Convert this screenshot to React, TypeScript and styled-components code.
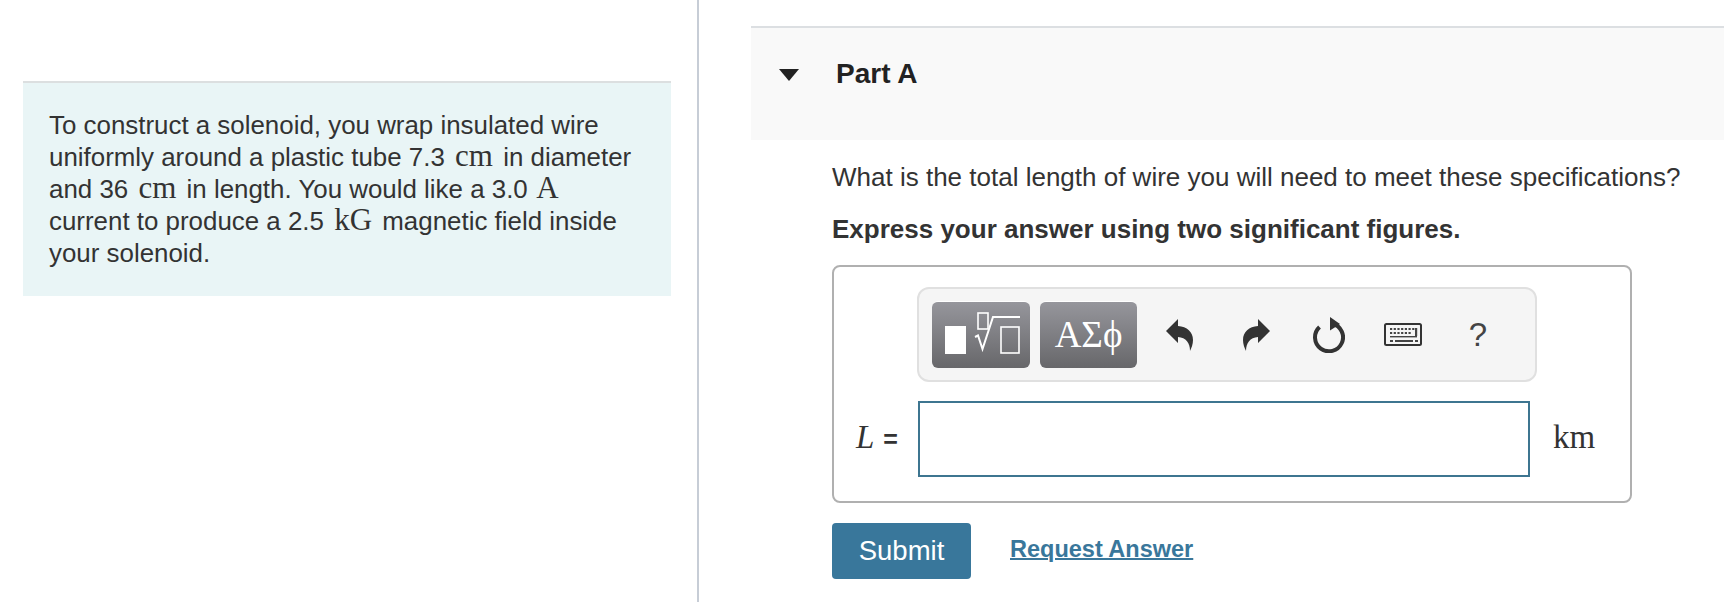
import React from 'react';
import styled, { createGlobalStyle } from 'styled-components';

const GlobalStyle = createGlobalStyle`
  html, body {
    margin: 0;
    padding: 0;
    background: #fff;
    overflow: hidden;
  }
`;

const Page = styled.div`
  width: 1724px;
  height: 602px;
  display: flex;
  font-family: 'Liberation Sans', Arial, sans-serif;
  color: #333;
  overflow: hidden;
`;

const LeftColumn = styled.aside`
  width: 699px;
  flex: none;
  box-sizing: border-box;
  padding: 81px 26px 0 23px;
  border-right: 2px solid #c7cdd6;
`;

const IntroPanel = styled.div`
  height: 215px;
  box-sizing: border-box;
  background: #e9f5f6;
  border-top: 2px solid #dcdfe0;
  padding: 26px 30px 0 26px;
  font-size: 25.9px;
  line-height: 32px;
`;

const Unit = styled.span`
  font-family: 'Liberation Serif', serif;
  font-size: 31px;
  line-height: 0;
  margin: 0 2.5px;
`;

const RightColumn = styled.main`
  flex: 1;
  min-width: 0;
  padding: 26px 0 0 52px;
`;

const PartHeader = styled.div`
  height: 114px;
  box-sizing: border-box;
  background: #f9f9f9;
  border-top: 2px solid #dcdfe2;
  display: flex;
  align-items: flex-start;
  padding: 31px 0 0 28px;
`;

const Caret = styled.span`
  width: 0;
  height: 0;
  margin: 10px 37px 0 0;
  border-left: 10px solid transparent;
  border-right: 10px solid transparent;
  border-top: 12px solid #222;
`;

const PartTitle = styled.h2`
  margin: 0;
  font-size: 28px;
  line-height: 30px;
  font-weight: 700;
  color: #222;
`;

const PartBody = styled.div`
  padding: 21px 0 0 81px;
`;

const Question = styled.p`
  margin: 0;
  font-size: 26px;
  line-height: 32px;
  white-space: nowrap;
`;

const Instruction = styled.p`
  margin: 20px 0 0;
  font-size: 26px;
  line-height: 32px;
  font-weight: 700;
`;

const AnswerBox = styled.div`
  width: 800px;
  height: 238px;
  box-sizing: border-box;
  margin-top: 20px;
  border: 2px solid #b0b0b0;
  border-radius: 8px;
  padding: 20px 32px 0 22px;
`;

const Toolbar = styled.div`
  width: 620px;
  height: 95px;
  box-sizing: border-box;
  margin-left: 61px;
  background: #f5f5f5;
  border: 2px solid #e0e0e0;
  border-radius: 12px;
  display: flex;
  align-items: center;
  padding: 0 0 0 13px;
`;

const TemplateButton = styled.div<{ $wide?: boolean }>`
  width: ${(props) => (props.$wide ? 97 : 98)}px;
  height: 67px;
  margin-right: 10px;
  border-radius: 6px;
  background: linear-gradient(#96969c, #67676a);
  border-top: 1px solid #fff;
  box-sizing: border-box;
  display: flex;
  align-items: center;
  justify-content: center;
  color: #fff;
  font-family: 'Liberation Serif', serif;
  font-size: 37px;
  line-height: 60px;

  svg {
    margin: -3px 0 0 4px;
  }
`;

const ToolIcon = styled.div<{ $w: number }>`
  width: ${(props) => props.$w}px;
  flex: none;
  display: flex;
  justify-content: center;
  align-items: center;
  color: #333;
`;

const HelpMark = styled.span`
  font-size: 33px;
  color: #444;
`;

const InputRow = styled.div`
  display: flex;
  align-items: center;
  margin-top: 19px;
`;

const VarLabel = styled.div`
  width: 62px;
  flex: none;
  box-sizing: border-box;
  padding-bottom: 3px;
  font-family: 'Liberation Serif', serif;
  white-space: nowrap;

  i {
    font-size: 33px;
  }

  span {
    font-family: 'Liberation Sans', sans-serif;
    font-size: 25px;
    font-weight: 700;
    margin-left: 9px;
  }
`;

const AnswerInput = styled.div`
  width: 612px;
  height: 76px;
  flex: none;
  box-sizing: border-box;
  border: 2px solid #3d7590;
  background: #fff;
`;

const UnitLabel = styled.div`
  margin-left: 23px;
  padding-bottom: 4px;
  font-family: 'Liberation Serif', serif;
  font-size: 33px;
`;

const Actions = styled.div`
  display: flex;
  align-items: center;
  margin-top: 20px;
`;

const SubmitButton = styled.button`
  width: 139px;
  height: 56px;
  border: 0;
  border-radius: 4px;
  background: #39779b;
  color: #fff;
  font-family: 'Liberation Sans', Arial, sans-serif;
  font-size: 27.5px;
  padding: 0;
`;

const RequestLink = styled.a`
  margin-left: 39px;
  color: #39779b;
  font-size: 23.5px;
  font-weight: 700;
  text-decoration: underline;
  text-decoration-thickness: 2px;
  position: relative;
  top: -2px;
`;

function RadicalIcon() {
  return (
    <svg width="76" height="44" viewBox="0 0 76 44" fill="none">
      <rect x="0" y="14" width="21" height="28" fill="#fff" />
      <rect x="33" y="1" width="10" height="16" stroke="#fff" strokeWidth="1.6" />
      <path d="M30 25 L33 23.5 L37.5 37 L48 5 H75" stroke="#fff" strokeWidth="2" />
      <rect x="56" y="15" width="18" height="26" stroke="#fff" strokeWidth="1.6" />
    </svg>
  );
}

function UndoIcon({ flip }: { flip?: boolean }) {
  return (
    <svg
      width="27"
      height="32"
      viewBox="0 0 27 32"
      style={flip ? { transform: 'scaleX(-1)' } : undefined}
    >
      <path
        fill="currentColor"
        d="M0 12 L12 0 V7 C21 7.5 27 13 27 21 C27 25 25.5 29 24 32 C24 24 20 18.5 12 18 V24 Z"
      />
    </svg>
  );
}

function ResetIcon() {
  return (
    <svg width="32" height="36" viewBox="0 0 32 36" fill="none">
      <path d="M19.5 6.7 A14 14 0 1 1 6.5 10" stroke="currentColor" strokeWidth="4" />
      <path d="M17 0 L27 7 L17 13.5 Z" fill="currentColor" />
    </svg>
  );
}

function KeyboardIcon() {
  const keys: React.ReactNode[] = [];
  for (let i = 0; i < 7; i++) {
    keys.push(<rect key={`a${i}`} x={6 + i * 3.7} y={5} width="2.2" height="2" />);
  }
  for (let i = 0; i < 6; i++) {
    keys.push(<rect key={`b${i}`} x={6 + i * 3.7} y={9} width="2.2" height="2" />);
  }
  return (
    <svg width="38" height="24" viewBox="0 0 38 24" fill="#444">
      <rect x="1" y="1" width="36" height="21" rx="1.5" fill="none" stroke="#333" strokeWidth="2" />
      {keys}
      <rect x="31" y="5" width="2.2" height="8" />
      <rect x="6" y="13" width="27" height="1.4" />
      <rect x="6" y="17" width="3" height="2" />
      <rect x="11" y="17" width="18" height="2" />
      <rect x="31" y="17" width="3" height="2" />
    </svg>
  );
}

export default function App() {
  return (
    <Page>
      <GlobalStyle />
      <LeftColumn>
        <IntroPanel>
          To construct a solenoid, you wrap insulated wire uniformly around a plastic tube 7.3
          <Unit> cm </Unit>in diameter and 36<Unit> cm </Unit>in length. You would like a 3.0
          <Unit> A </Unit>current to produce a 2.5<Unit> kG </Unit>magnetic field inside your
          solenoid.
        </IntroPanel>
      </LeftColumn>
      <RightColumn>
        <PartHeader>
          <Caret />
          <PartTitle>Part A</PartTitle>
        </PartHeader>
        <PartBody>
          <Question>What is the total length of wire you will need to meet these specifications?</Question>
          <Instruction>Express your answer using two significant figures.</Instruction>
          <AnswerBox>
            <Toolbar>
              <TemplateButton>
                <RadicalIcon />
              </TemplateButton>
              <TemplateButton $wide>ΑΣϕ</TemplateButton>
              <ToolIcon $w={65}>
                <UndoIcon />
              </ToolIcon>
              <ToolIcon $w={89}>
                <UndoIcon flip />
              </ToolIcon>
              <ToolIcon $w={56}>
                <ResetIcon />
              </ToolIcon>
              <ToolIcon $w={92}>
                <KeyboardIcon />
              </ToolIcon>
              <ToolIcon $w={58}>
                <HelpMark>?</HelpMark>
              </ToolIcon>
            </Toolbar>
            <InputRow>
              <VarLabel>
                <i>L</i>
                <span>=</span>
              </VarLabel>
              <AnswerInput />
              <UnitLabel>km</UnitLabel>
            </InputRow>
          </AnswerBox>
          <Actions>
            <SubmitButton>Submit</SubmitButton>
            <RequestLink href="#">Request Answer</RequestLink>
          </Actions>
        </PartBody>
      </RightColumn>
    </Page>
  );
}
